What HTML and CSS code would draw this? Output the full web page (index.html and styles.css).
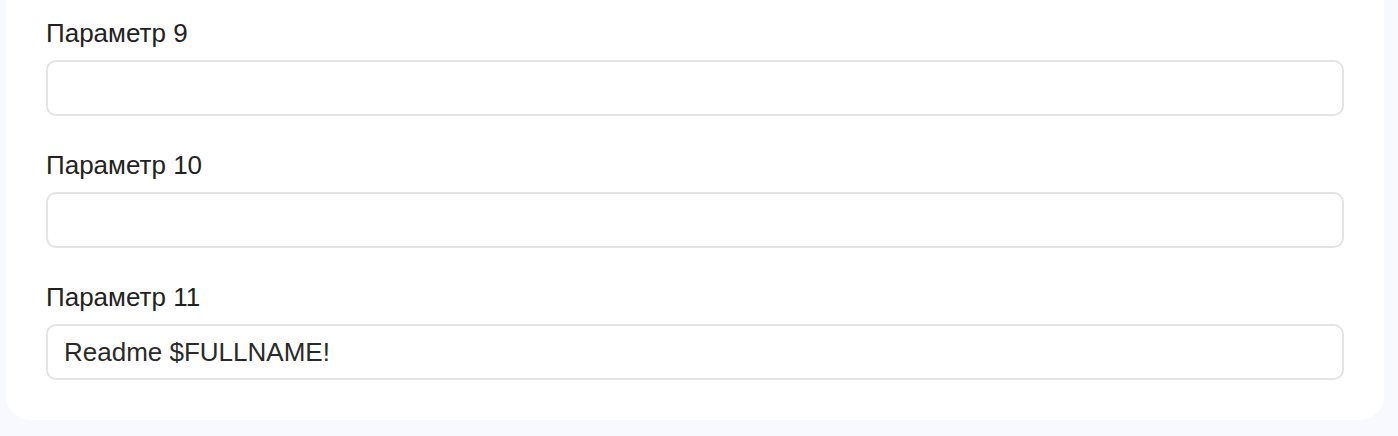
FILE: index.html
```html
<!DOCTYPE html>
<html lang="ru">
<head>
<meta charset="utf-8">
<title>Параметры</title>
<link rel="stylesheet" href="styles.css">
</head>
<body>
<div class="page">
  <form class="card">
    <div class="field">
      <label class="label" for="p9">Параметр 9</label>
      <input class="input" id="p9" type="text" value="">
    </div>
    <div class="field">
      <label class="label" for="p10">Параметр 10</label>
      <input class="input" id="p10" type="text" value="">
    </div>
    <div class="field">
      <label class="label" for="p11">Параметр 11</label>
      <input class="input" id="p11" type="text" value="Readme $FULLNAME!">
    </div>
  </form>
</div>
</body>
</html>
```
FILE: styles.css
```css
html, body {
  margin: 0;
  padding: 0;
  background: #f8f9fe;
  font-family: "Liberation Sans", Arial, sans-serif;
}
.page {
  padding: 0 14px 16px 6px;
}
.card {
  background: #ffffff;
  border-radius: 0 0 24px 24px;
  padding: 19px 40px 40px 40px;
  display: flex;
  flex-direction: column;
  gap: 35px;
}
.field {
  display: flex;
  flex-direction: column;
  gap: 13px;
}
.label {
  font-size: 26px;
  line-height: 28px;
  color: #222222;
}
.input {
  box-sizing: border-box;
  height: 56px;
  width: 100%;
  border: 2px solid #e4e4e4;
  border-radius: 10px;
  padding: 0 16px;
  font-family: "Liberation Sans", Arial, sans-serif;
  font-size: 26px;
  color: #2a2a2a;
  background: #ffffff;
  outline: none;
}
```
